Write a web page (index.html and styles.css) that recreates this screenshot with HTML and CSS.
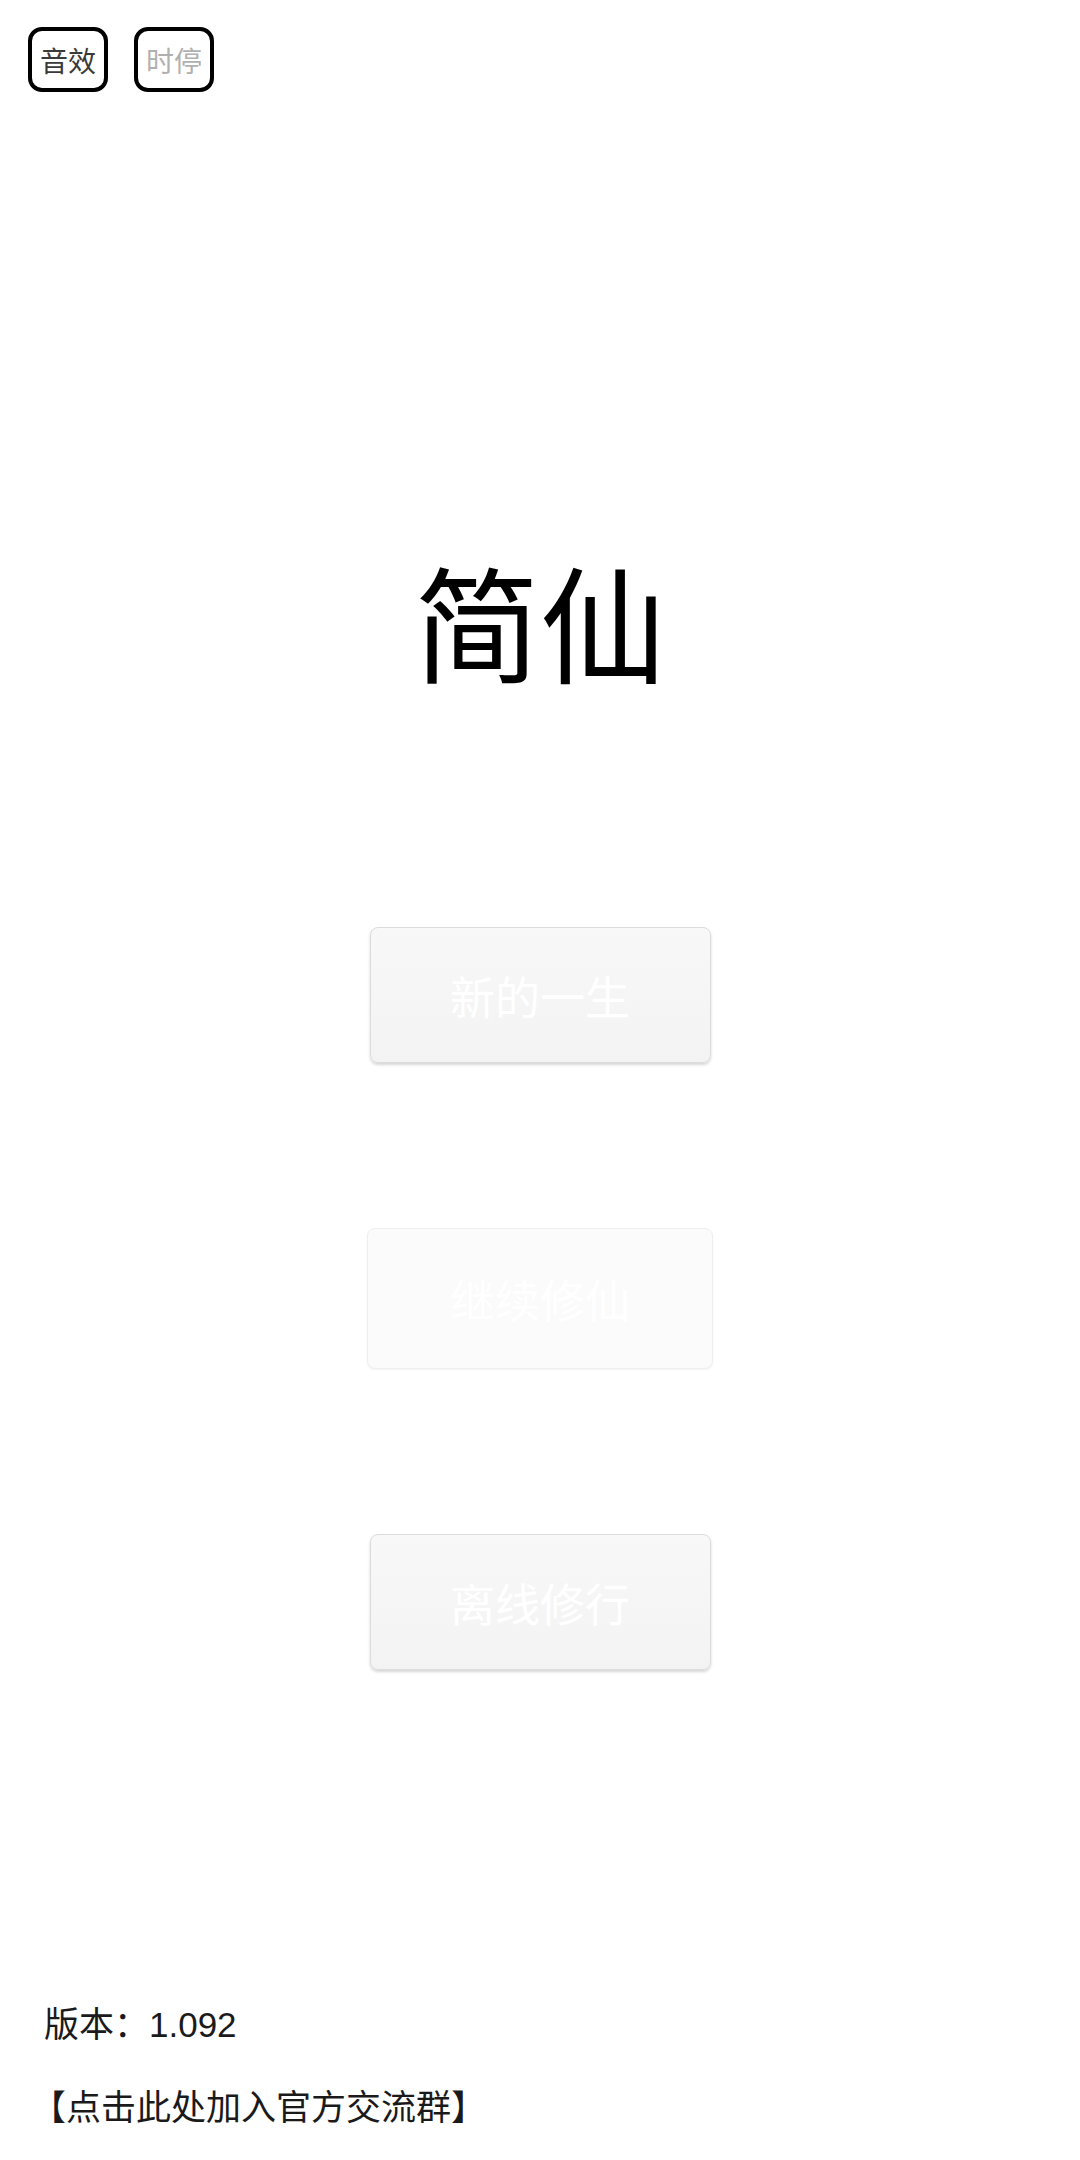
FILE: index.html
```html
<!DOCTYPE html>
<html lang="zh-CN">
<head>
<meta charset="utf-8">
<title>简仙</title>
<link rel="stylesheet" href="styles.css">
</head>
<body>
<div class="page">
  <div class="topbar">
    <div class="toggle on">音效</div>
    <div class="toggle off">时停</div>
  </div>
  <h1 class="title">简仙</h1>
  <div class="menu">
    <div class="btn">新的一生</div>
    <div class="btn disabled">继续修仙</div>
    <div class="btn">离线修行</div>
  </div>
  <div class="footer">
    <div class="line">版本：1.092</div>
    <div class="line group">【点击此处加入官方交流群】</div>
  </div>
</div>
</body>
</html>
```

FILE: styles.css
```css
html, body {
  margin: 0;
  padding: 0;
  background: #ffffff;
}
body {
  font-family: "Noto Sans CJK SC", "Liberation Sans", sans-serif;
  color: #000;
}
.page {
  width: 1080px;
  height: 2160px;
  display: flex;
  flex-direction: column;
  overflow: hidden;
}
.topbar {
  display: flex;
  gap: 26px;
  margin-top: 27px;
  padding-left: 28px;
}
.toggle {
  box-sizing: border-box;
  width: 80px;
  height: 65px;
  border: 4px solid #000;
  border-radius: 14px;
  font-size: 28px;
  display: flex;
  align-items: center;
  justify-content: center;
  line-height: 1;
}
.toggle.on { color: #3a3a3a; }
.toggle.off { color: #b0b0b0; }
.title {
  margin: 462px 0 0 0;
  font-size: 126px;
  line-height: 130px;
  height: 130px;
  font-weight: 400;
  text-align: center;
}
.menu {
  margin-top: 243px;
  display: flex;
  flex-direction: column;
  align-items: center;
  gap: 165px;
}
.btn {
  box-sizing: border-box;
  width: 341px;
  height: 136px;
  border: 1px solid #dcdcdc;
  border-radius: 8px;
  background: linear-gradient(#f8f8f8, #f3f3f3);
  box-shadow: 0 2px 3px rgba(0, 0, 0, 0.16);
  color: #ffffff;
  font-size: 45px;
  display: flex;
  align-items: center;
  justify-content: center;
  line-height: 1;
}
.btn.disabled {
  width: 346px;
  height: 141px;
  border-color: #efefef;
  background: #fbfbfb;
  box-shadow: 0 1px 2px rgba(0, 0, 0, 0.05);
}
.footer {
  margin-top: 334px;
  padding-left: 44px;
  display: flex;
  flex-direction: column;
  gap: 41px;
}
.line {
  font-size: 35px;
  line-height: 42px;
  color: #1a1a1a;
  font-family: "Liberation Sans", "Noto Sans CJK SC", sans-serif;
}
.line.group {
  margin-left: -13px;
}
```
